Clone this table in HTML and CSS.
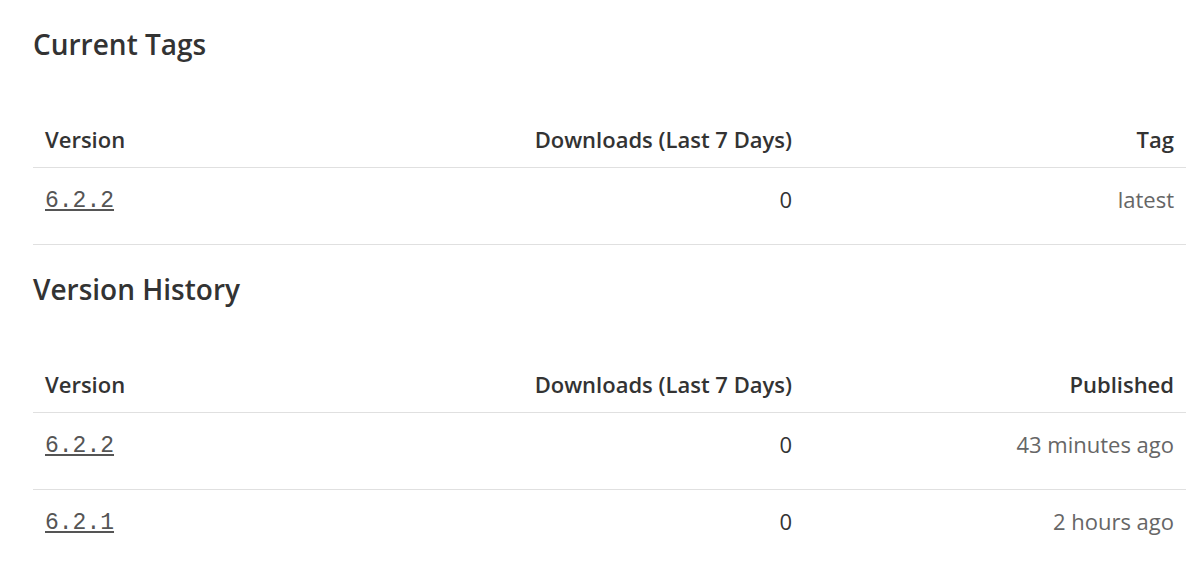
FILE: index.html
```html
<!DOCTYPE html>
<html>
<head>
    <title>Versions</title>
    <link rel="stylesheet" href="styles.css">
</head>
<body>
    <h2 class="section-title">Current Tags</h2>
    <table class="versions">
        <thead>
            <tr>
                <th class="col-version">Version</th>
                <th class="col-downloads">Downloads (Last 7 Days)</th>
                <th class="col-extra">Tag</th>
            </tr>
        </thead>
        <tbody>
            <tr>
                <td><a class="version-link" href="#">6.2.2</a></td>
                <td class="num">0</td>
                <td class="muted">latest</td>
            </tr>
        </tbody>
    </table>

    <h2 class="section-title">Version History</h2>
    <table class="versions">
        <thead>
            <tr>
                <th class="col-version">Version</th>
                <th class="col-downloads">Downloads (Last 7 Days)</th>
                <th class="col-extra">Published</th>
            </tr>
        </thead>
        <tbody>
            <tr>
                <td><a class="version-link" href="#">6.2.2</a></td>
                <td class="num">0</td>
                <td class="muted">43 minutes ago</td>
            </tr>
            <tr>
                <td><a class="version-link" href="#">6.2.1</a></td>
                <td class="num">0</td>
                <td class="muted">2 hours ago</td>
            </tr>
        </tbody>
    </table>
</body>
</html>
```

FILE: styles.css
```css
/* Pagina */
body {
    margin: 0;
    padding: 0 14px 0 33px;
    background: #fff;
    color: #333;
    font-family: "Open Sans", "Noto Sans", sans-serif;
}

.section-title {
    margin: 26px 0 41px;
    font-size: 28px;
    line-height: 36px;
    font-weight: 600;
    color: #333;
}

/* Tablas */
.versions {
    width: 100%;
    border-collapse: collapse;
}

.versions th,
.versions td {
    padding: 0 12px;
    font-size: 22px;
    line-height: 24px;
}

.versions th {
    padding-top: 24px;
    padding-bottom: 16px;
    font-weight: 600;
    text-align: right;
    border-bottom: 1px solid #e0e0e0;
}

.versions td {
    height: 24px;
    padding-top: 18px;
    padding-bottom: 33px;
    text-align: right;
    border-bottom: 1px solid #e0e0e0;
}

.versions th.col-version,
.versions td:first-child {
    text-align: left;
}

.col-version {
    width: 356px;
}

.col-downloads {
    width: 367px;
}

.version-link {
    font-family: "Liberation Mono", "DejaVu Sans Mono", monospace;
    font-size: 23px;
    line-height: 20px;
    color: #555;
    text-decoration: underline;
}

.num {
    color: #333;
}

.muted {
    color: #666;
}
```
